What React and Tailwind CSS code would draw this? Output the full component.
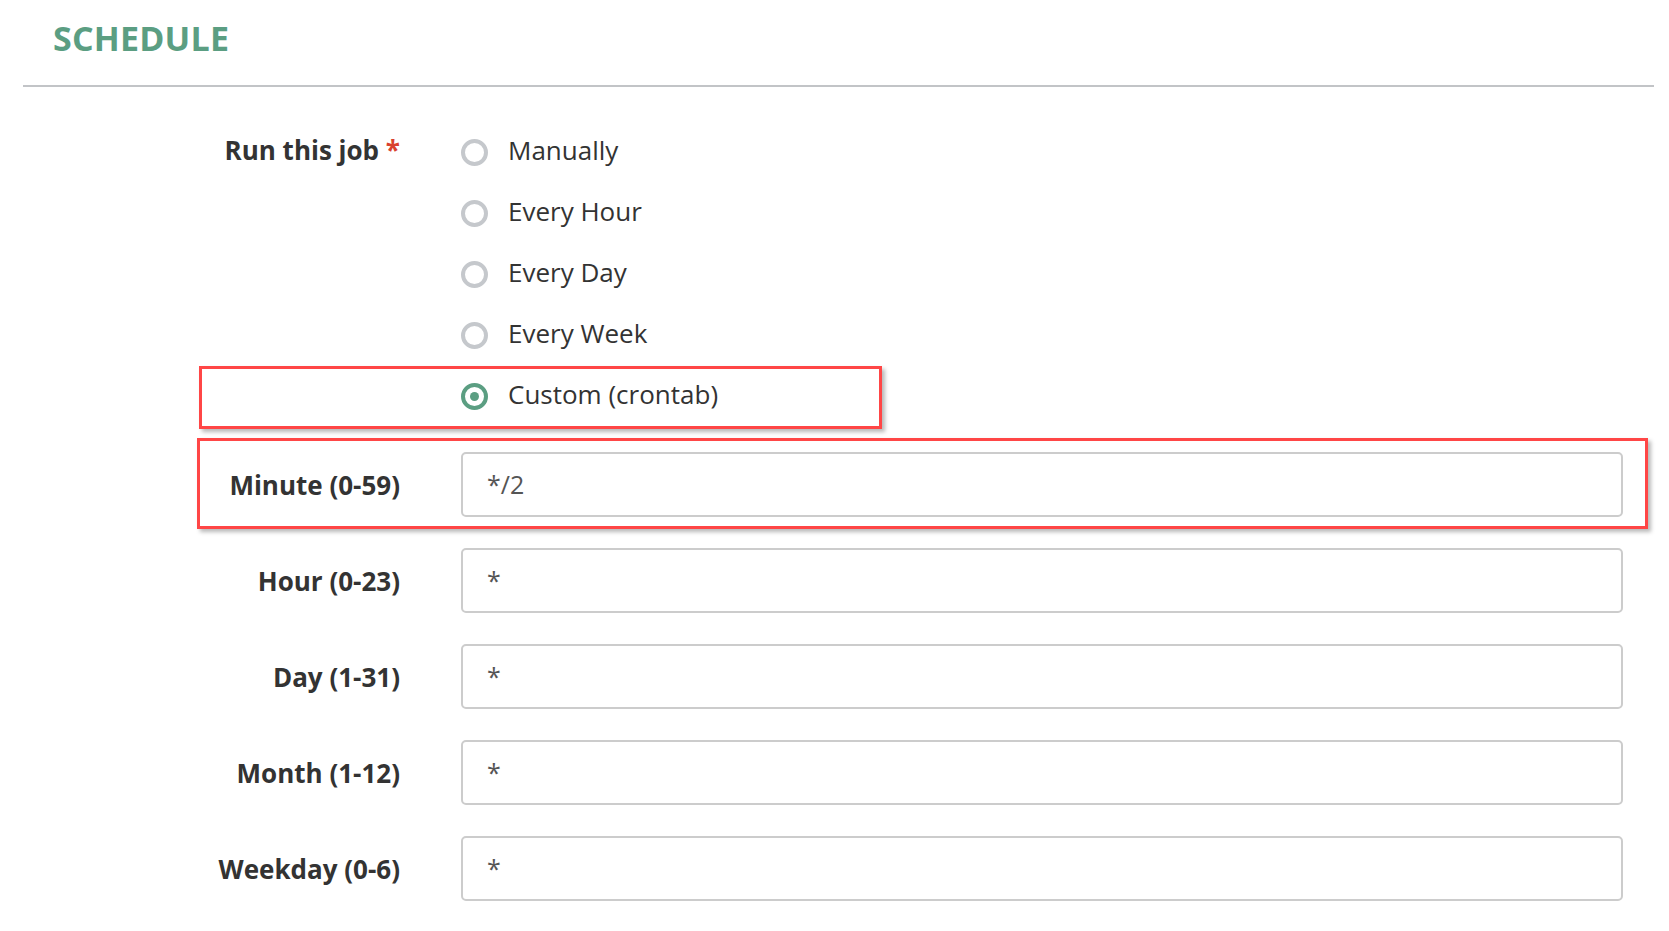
import React from "react";

const font = { fontFamily: '"Open Sans", "Noto Sans", sans-serif' };

function Radio({ label, checked }) {
  return (
    <div className="flex h-[61px] items-center">
      {checked ? (
        <span className="flex h-[27px] w-[27px] items-center justify-center rounded-full border-4 border-[#5b9e82]">
          <span className="h-[9px] w-[9px] rounded-full bg-[#5b9e82]" />
        </span>
      ) : (
        <span className="h-[27px] w-[27px] rounded-full border-4 border-[#c5c8cc]" />
      )}
      <span className="mb-[6px] ml-[20px] text-[26px] leading-[36px] text-[#333]">{label}</span>
    </div>
  );
}

function Field({ label, value }) {
  return (
    <div className="flex items-center">
      <div className="w-[400px] text-right text-[26px] font-bold leading-[36px] text-[#333]">{label}</div>
      <div className="ml-[61px] flex h-[65px] w-[1162px] items-center rounded-[5px] border-2 border-[#cccccc] bg-white pl-[24px] text-[25px] text-[#555]">
        {value}
      </div>
    </div>
  );
}

export default function App() {
  const redBox = "pointer-events-none absolute border-[3px] border-[#ff4646] shadow-[3px_3px_4px_rgba(0,0,0,0.28)]";
  return (
    <div className="relative h-[931px] w-full overflow-hidden bg-white" style={font}>
      <div className="pl-[53px] pt-[21px]">
        <h1 className="text-[34px] font-bold leading-[34px] tracking-[0.2px] text-[#5b9e82]">SCHEDULE</h1>
      </div>
      <div className="ml-[23px] mr-[15px] mt-[30px] h-[2px] bg-[#c2c4c7]" />

      <div className="mt-[35px] flex">
        <div className="flex h-[61px] w-[400px] items-center justify-end">
          <span className="mb-[6px] text-[26px] font-bold leading-[36px] text-[#333]">
            Run this job <span className="text-[#d9412f]">*</span>
          </span>
        </div>
        <div className="ml-[61px]">
          <Radio label="Manually" />
          <Radio label="Every Hour" />
          <Radio label="Every Day" />
          <Radio label="Every Week" />
          <div className="relative">
            <div className={redBox + " -left-[262px] w-[683px] top-[0px] bottom-[-2px]"} />
            <Radio label="Custom (crontab)" checked />
          </div>
        </div>
      </div>

      <div className="mt-[25px] flex flex-col gap-[31px]">
        <div className="relative">
          <div className={redBox + " left-[197px] w-[1451px] top-[-14px] bottom-[-12px]"} />
          <Field label="Minute (0-59)" value="*/2" />
        </div>
        <Field label="Hour (0-23)" value="*" />
        <Field label="Day (1-31)" value="*" />
        <Field label="Month (1-12)" value="*" />
        <Field label="Weekday (0-6)" value="*" />
      </div>
    </div>
  );
}
